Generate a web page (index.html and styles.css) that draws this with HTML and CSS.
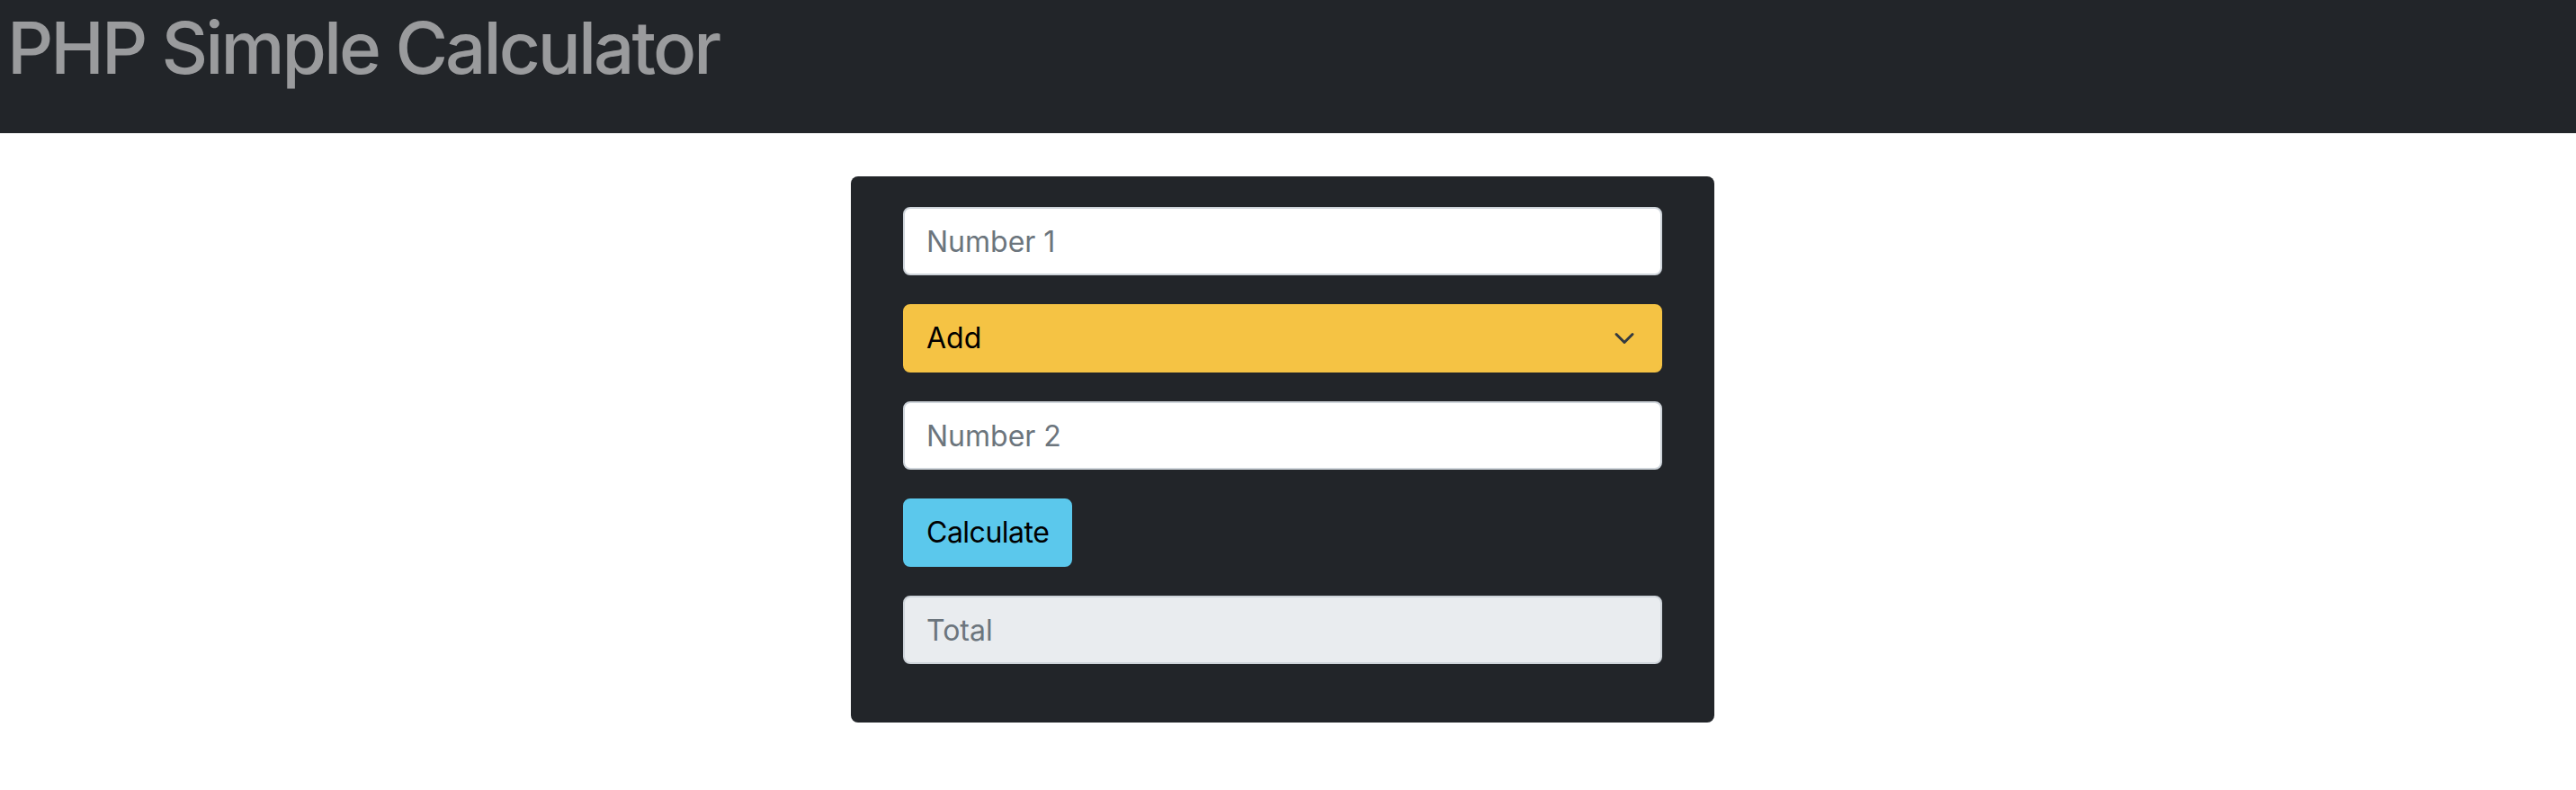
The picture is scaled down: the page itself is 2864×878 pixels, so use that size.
FILE: index.html
```html
<!DOCTYPE html>
<html lang="en">
<head>
<meta charset="utf-8">
<title>PHP Simple Calculator</title>
<link rel="stylesheet" href="styles.css">
</head>
<body>
<header class="topbar">
  <h1 class="title">PHP Simple Calculator</h1>
</header>
<main class="wrap">
  <form class="calc">
    <input class="field" type="text" placeholder="Number 1">
    <div class="select">
      <span class="select-text">Add</span>
      <svg class="chevron" width="32" height="24" viewBox="0 0 16 16" aria-hidden="true"><path d="m2 5 6 6 6-6" fill="none" stroke="#343a40" stroke-width="2" stroke-linecap="round" stroke-linejoin="round"/></svg>
    </div>
    <input class="field" type="text" placeholder="Number 2">
    <div class="btn-row"><button class="btn" type="button">Calculate</button></div>
    <input class="field field-total" type="text" placeholder="Total" readonly>
  </form>
</main>
</body>
</html>
```

FILE: styles.css
```css
* { box-sizing: border-box; }
html, body { margin: 0; padding: 0; background: #ffffff; }
body { font-family: Inter, "Noto Sans", sans-serif; }

.topbar {
  background: #222529;
  height: 148px;
  padding: 5px 0 0 8px;
}
.title {
  margin: 0;
  font-size: 80px;
  line-height: 96px;
  font-weight: 500;
  color: #9a9b9d;
  letter-spacing: -3px;
}

.wrap {
  padding: 48px 12px 0 0;
}
.calc {
  width: 960px;
  margin: 0 auto;
  background: #222529;
  border-radius: 8px;
  padding: 34px 58px 65px;
  display: flex;
  flex-direction: column;
  gap: 32px;
}
.field {
  display: block;
  width: 100%;
  height: 76px;
  font-family: inherit;
  font-size: 32px;
  line-height: 48px;
  padding: 12px 24px;
  border: 2px solid #ced4da;
  border-radius: 8px;
  background: #ffffff;
  color: #212529;
  outline: none;
}
.field::placeholder { color: #6c757d; opacity: 1; }
.field-total { background: #e9ecef; }

.select {
  height: 76px;
  display: flex;
  align-items: center;
  justify-content: space-between;
  padding: 12px 24px;
  border: 2px solid #f5c344;
  border-radius: 8px;
  background: #f5c344;
  color: #000000;
  font-size: 32px;
  line-height: 48px;
}
.chevron { display: block; flex: none; }

.btn-row { display: flex; }
.btn {
  height: 76px;
  font-family: inherit;
  font-size: 32px;
  line-height: 48px;
  padding: 12px 24px;
  border: 2px solid #5bc8ec;
  border-radius: 8px;
  background: #5bc8ec;
  color: #000000;
  letter-spacing: -0.5px;
  cursor: pointer;
}
```
